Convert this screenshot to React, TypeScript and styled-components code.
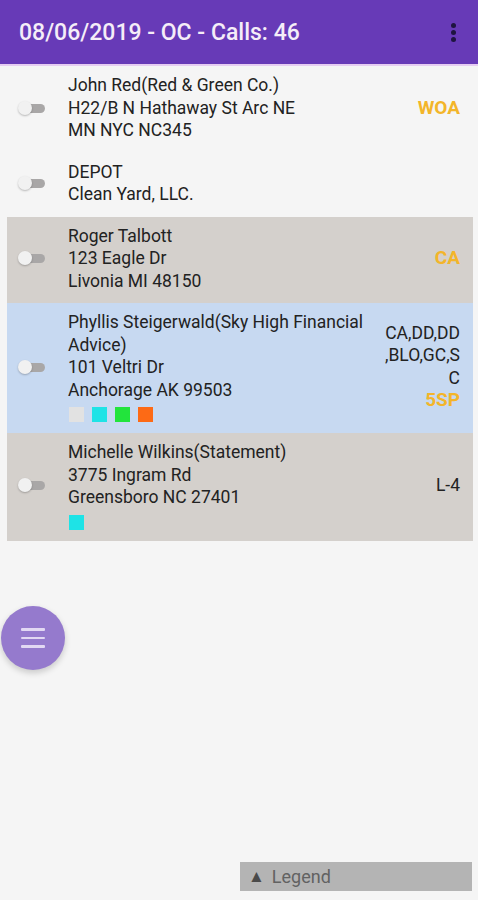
import React from 'react'
import styled, { createGlobalStyle } from 'styled-components'

const GlobalStyle = createGlobalStyle`
  html, body {
    margin: 0;
    padding: 0;
    background: #f5f5f5;
    font-family: Roboto, "Noto Sans", Arial, sans-serif;
  }
`

const Screen = styled.div`
  position: relative;
  width: 478px;
  height: 900px;
  overflow: hidden;
  background: #f5f5f5;
  display: flex;
  flex-direction: column;
`

const TopBar = styled.header`
  height: 66px;
  background: #673ab7;
  border-bottom: 2px solid #e6cdf2;
  display: flex;
  align-items: center;
  justify-content: space-between;
  padding: 0 18px 0 19px;
  box-sizing: border-box;
  flex-shrink: 0;
`

const Title = styled.h1`
  margin: 0;
  font-size: 23px;
  font-weight: 500;
  color: #f5edf8;
`

const MenuDots = styled.div`
  display: flex;
  flex-direction: column;
  gap: 2px;
  padding: 0 4px;
  span {
    width: 5px;
    height: 5px;
    border-radius: 50%;
    background: #1e1440;
  }
`

const List = styled.div`
  display: flex;
  flex-direction: column;
  padding: 0 5px 0 7px;
`

const Row = styled.div<{ $bg: string }>`
  display: flex;
  align-items: center;
  background: ${({ $bg }) => $bg};
  padding: 8px 13px 11px 0;
`

const ToggleCell = styled.div`
  width: 61px;
  flex-shrink: 0;
  display: flex;
  align-items: center;
  padding-left: 11px;
  box-sizing: border-box;
`

const Toggle = styled.div`
  position: relative;
  width: 27px;
  height: 14px;
  &::before {
    content: '';
    position: absolute;
    left: 4px;
    top: 3px;
    width: 23px;
    height: 9px;
    border-radius: 5px;
    background: #a9a7a7;
  }
  &::after {
    content: '';
    position: absolute;
    left: 0;
    top: 0;
    width: 14px;
    height: 14px;
    border-radius: 50%;
    background: #f1f1f1;
    box-shadow: 0 1px 2px rgba(0, 0, 0, 0.25);
  }
`

const Info = styled.div`
  flex: 1;
  min-width: 0;
  padding-right: 6px;
`

const Line = styled.div`
  font-size: 17.5px;
  line-height: 22.5px;
  color: #222;
`

const Swatches = styled.div`
  display: flex;
  gap: 8px;
  margin: 6px 0 0 1px;
`

const Swatch = styled.div<{ $color: string }>`
  width: 15px;
  height: 15px;
  background: ${({ $color }) => $color};
`

const Side = styled.div`
  width: 78px;
  flex-shrink: 0;
  text-align: right;
  display: flex;
  flex-direction: column;
  align-items: flex-end;
`

const Codes = styled.div`
  font-size: 17.5px;
  line-height: 22.5px;
  color: #222;
  line-break: anywhere;
  word-break: break-all;
  width: 76px;
`

const Tag = styled.div<{ $accent?: boolean }>`
  font-size: ${({ $accent }) => ($accent ? '19px' : '17.5px')};
  line-height: 22.5px;
  font-weight: ${({ $accent }) => ($accent ? 700 : 400)};
  color: ${({ $accent }) => ($accent ? '#f3b52a' : '#222')};
`

const Fab = styled.button`
  position: absolute;
  left: 1px;
  top: 606px;
  width: 64px;
  height: 64px;
  border-radius: 50%;
  border: none;
  background: #957acd;
  box-shadow: 0 3px 6px rgba(0, 0, 0, 0.18);
  display: flex;
  flex-direction: column;
  align-items: center;
  justify-content: center;
  gap: 6px;
  padding: 0;
  span {
    width: 24px;
    height: 2.5px;
    border-radius: 1px;
    background: #e2d8f3;
  }
`

const Legend = styled.div`
  position: absolute;
  left: 240px;
  top: 862px;
  width: 232px;
  height: 29px;
  background: #b4b4b4;
  display: flex;
  align-items: center;
  padding-left: 8px;
  box-sizing: border-box;
  gap: 7px;
  font-size: 18px;
  color: #626262;
`

const Arrow = styled.span`
  font-size: 17px;
  color: #4a4a4a;
`

interface Stop {
  lines: string[]
  bg: string
  swatches?: string[]
  codes?: string
  tag?: string
  accent?: boolean
}

const stops: Stop[] = [
  {
    lines: ['John Red(Red & Green Co.)', 'H22/B N Hathaway St Arc NE', 'MN NYC NC345'],
    bg: '#f5f5f5',
    tag: 'WOA',
    accent: true,
  },
  { lines: ['DEPOT', 'Clean Yard, LLC.'], bg: '#f5f5f5' },
  {
    lines: ['Roger Talbott', '123 Eagle Dr', 'Livonia MI 48150'],
    bg: '#d4d0cc',
    tag: 'CA',
    accent: true,
  },
  {
    lines: ['Phyllis Steigerwald(Sky High Financial Advice)', '101 Veltri Dr', 'Anchorage AK 99503'],
    bg: '#c7d9f1',
    swatches: ['#e2e2e2', '#1ee3e6', '#22e43c', '#fd6a15'],
    codes: 'CA,DD,DD,BLO,GC,SC',
    tag: '5SP',
    accent: true,
  },
  {
    lines: ['Michelle Wilkins(Statement)', '3775 Ingram Rd', 'Greensboro NC 27401'],
    bg: '#d4d0cc',
    swatches: ['#1ee3e6'],
    tag: 'L-4',
  },
]

export default function App() {
  return (
    <Screen>
      <GlobalStyle />
      <TopBar>
        <Title>08/06/2019 - OC - Calls: 46</Title>
        <MenuDots>
          <span />
          <span />
          <span />
        </MenuDots>
      </TopBar>
      <List>
        {stops.map((s, i) => (
          <Row key={i} $bg={s.bg}>
            <ToggleCell>
              <Toggle />
            </ToggleCell>
            <Info>
              {s.lines.map((l, j) => (
                <Line key={j}>{l}</Line>
              ))}
              {s.swatches && (
                <Swatches>
                  {s.swatches.map((c, j) => (
                    <Swatch key={j} $color={c} />
                  ))}
                </Swatches>
              )}
            </Info>
            <Side>
              {s.codes && <Codes>{s.codes}</Codes>}
              {s.tag && <Tag $accent={s.accent}>{s.tag}</Tag>}
            </Side>
          </Row>
        ))}
      </List>
      <Fab>
        <span />
        <span />
        <span />
      </Fab>
      <Legend>
        <Arrow>▲</Arrow>
        Legend
      </Legend>
    </Screen>
  )
}
